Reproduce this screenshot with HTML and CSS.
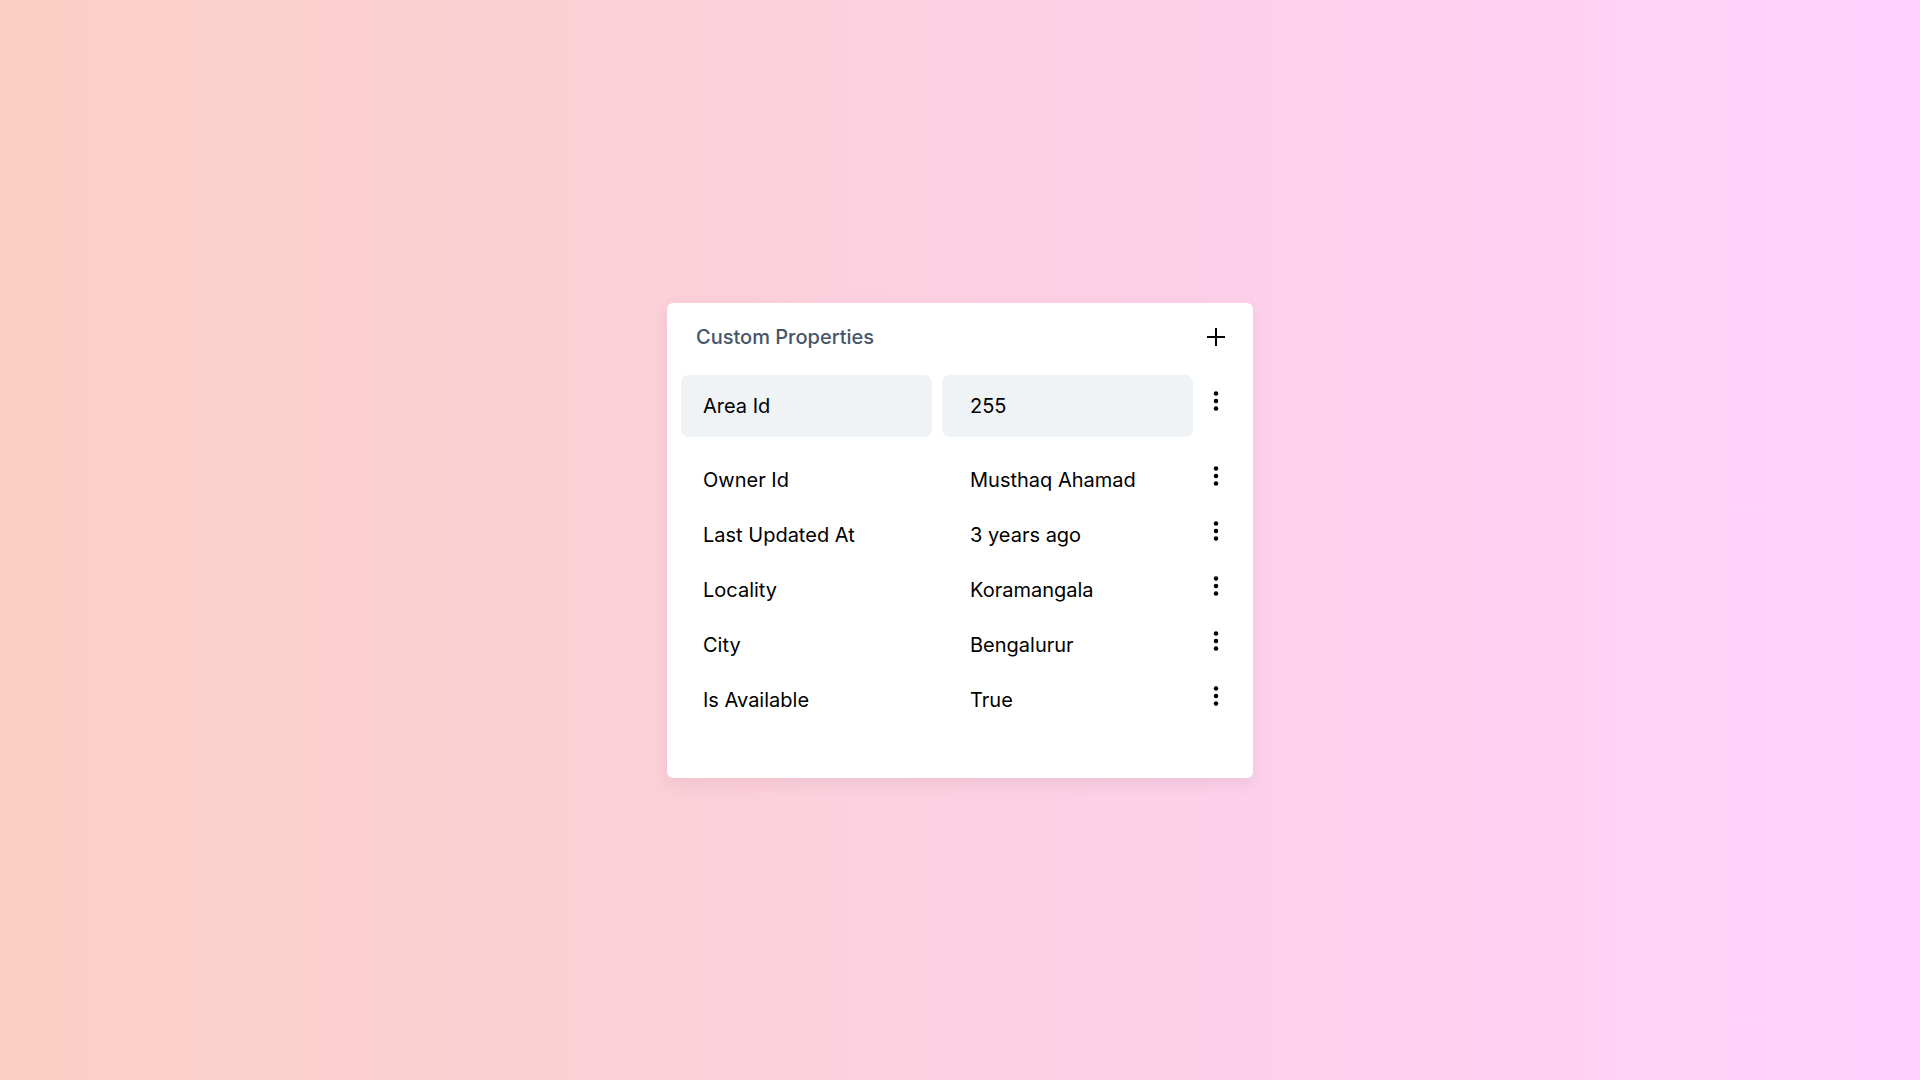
FILE: index.html
```html
<!DOCTYPE html>
<html lang="en">
<head>
<meta charset="utf-8">
<title>Custom Properties</title>
<link rel="stylesheet" href="styles.css">
</head>
<body>
<main class="page">
  <section class="card">
    <header class="card-header">
      <h2 class="card-title">Custom Properties</h2>
      <button class="icon-btn add-btn" aria-label="Add property">
        <svg width="20" height="20" viewBox="0 0 20 20" fill="none" stroke="currentColor" stroke-width="2" stroke-linecap="butt"><path d="M10 1v18M1 10h18"/></svg>
      </button>
    </header>
    <div class="props">
      <div class="prop prop-editing">
        <div class="cell key">Area Id</div>
        <div class="cell value">255</div>
        <button class="icon-btn kebab" aria-label="More"><svg width="24" height="24" viewBox="0 0 24 24" fill="currentColor"><circle cx="12" cy="4.6" r="2.25"/><circle cx="12" cy="12" r="2.25"/><circle cx="12" cy="19.4" r="2.25"/></svg></button>
      </div>
      <div class="prop">
        <div class="cell key">Owner Id</div>
        <div class="cell value">Musthaq Ahamad</div>
        <button class="icon-btn kebab" aria-label="More"><svg width="24" height="24" viewBox="0 0 24 24" fill="currentColor"><circle cx="12" cy="4.6" r="2.25"/><circle cx="12" cy="12" r="2.25"/><circle cx="12" cy="19.4" r="2.25"/></svg></button>
      </div>
      <div class="prop">
        <div class="cell key">Last Updated At</div>
        <div class="cell value">3 years ago</div>
        <button class="icon-btn kebab" aria-label="More"><svg width="24" height="24" viewBox="0 0 24 24" fill="currentColor"><circle cx="12" cy="4.6" r="2.25"/><circle cx="12" cy="12" r="2.25"/><circle cx="12" cy="19.4" r="2.25"/></svg></button>
      </div>
      <div class="prop">
        <div class="cell key">Locality</div>
        <div class="cell value">Koramangala</div>
        <button class="icon-btn kebab" aria-label="More"><svg width="24" height="24" viewBox="0 0 24 24" fill="currentColor"><circle cx="12" cy="4.6" r="2.25"/><circle cx="12" cy="12" r="2.25"/><circle cx="12" cy="19.4" r="2.25"/></svg></button>
      </div>
      <div class="prop">
        <div class="cell key">City</div>
        <div class="cell value">Bengalurur</div>
        <button class="icon-btn kebab" aria-label="More"><svg width="24" height="24" viewBox="0 0 24 24" fill="currentColor"><circle cx="12" cy="4.6" r="2.25"/><circle cx="12" cy="12" r="2.25"/><circle cx="12" cy="19.4" r="2.25"/></svg></button>
      </div>
      <div class="prop">
        <div class="cell key">Is Available</div>
        <div class="cell value">True</div>
        <button class="icon-btn kebab" aria-label="More"><svg width="24" height="24" viewBox="0 0 24 24" fill="currentColor"><circle cx="12" cy="4.6" r="2.25"/><circle cx="12" cy="12" r="2.25"/><circle cx="12" cy="19.4" r="2.25"/></svg></button>
      </div>
    </div>
  </section>
</main>
</body>
</html>
```
FILE: styles.css
```css
* { box-sizing: border-box; }

html, body {
  margin: 0;
  padding: 0;
  height: 100%;
}

body {
  font-family: Inter, "Noto Sans", "Liberation Sans", sans-serif;
  color: #000;
  background: linear-gradient(to right, #fad0c4 0%, #ffd1ff 100%);
}

.page {
  height: 100vh;
  display: flex;
  align-items: center;
  justify-content: center;
}

.card {
  width: 586px;
  height: 475px;
  background: #fff;
  border-radius: 6px;
  box-shadow: 0 6px 16px rgba(120, 60, 90, 0.10);
  padding: 14px 14px 50px 14px;
}

.card-header {
  height: 40px;
  display: flex;
  align-items: center;
  justify-content: space-between;
  padding-left: 15px;
  margin-bottom: 18px;
}

.card-title {
  margin: 0;
  font-size: 20px;
  font-weight: 500;
  color: #475569;
  letter-spacing: 0;
}

.icon-btn {
  border: 0;
  background: none;
  padding: 0;
  margin: 0;
  color: #000;
  display: flex;
  align-items: center;
  justify-content: center;
  cursor: pointer;
}

.add-btn {
  width: 46px;
  height: 40px;
}

.props {
  display: flex;
  flex-direction: column;
}

.prop {
  display: grid;
  grid-template-columns: 251px 251px 26px;
  column-gap: 10px;
  height: 55px;
  font-size: 20px;
}

.prop .cell {
  display: flex;
  align-items: center;
  white-space: nowrap;
}

.prop .key { padding-left: 22px; }
.prop .value { padding-left: 28px; }

.prop-editing {
  height: 62px;
  margin-bottom: 16px;
}

.prop-editing .cell {
  background: #eff3f6;
  border-radius: 8px;
}

.kebab {
  align-self: center;
  width: 26px;
  height: 24px;
  margin-bottom: 9px;
}
```
